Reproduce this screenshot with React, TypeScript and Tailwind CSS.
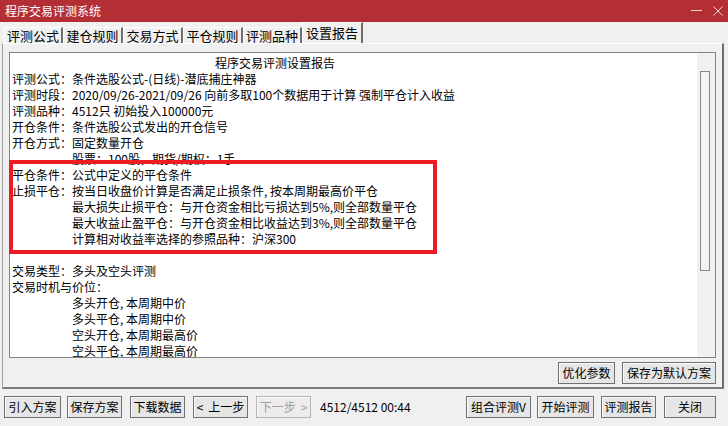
import React from "react";

const lines: { t: string; indent?: boolean }[] = [
  { t: "评测公式：条件选股公式-(日线)-潜底捕庄神器" },
  { t: "评测时段：2020/09/26-2021/09/26 向前多取100个数据用于计算 强制平仓计入收益" },
  { t: "评测品种：4512只 初始投入100000元" },
  { t: "开仓条件：条件选股公式发出的开仓信号" },
  { t: "开仓方式：固定数量开仓" },
  { t: "股票：100股，期货/期权：1手", indent: true },
  { t: "平仓条件：公式中定义的平仓条件" },
  { t: "止损平仓：按当日收盘价计算是否满足止损条件, 按本周期最高价平仓" },
  { t: "最大损失止损平仓：与开仓资金相比亏损达到5%,则全部数量平仓", indent: true },
  { t: "最大收益止盈平仓：与开仓资金相比收益达到3%,则全部数量平仓", indent: true },
  { t: "计算相对收益率选择的参照品种：沪深300", indent: true },
  { t: "" },
  { t: "交易类型：多头及空头评测" },
  { t: "交易时机与价位：" },
  { t: "多头开仓, 本周期中价", indent: true },
  { t: "多头平仓, 本周期中价", indent: true },
  { t: "空头开仓, 本周期最高价", indent: true },
  { t: "空头平仓, 本周期最高价", indent: true },
];

function Btn({ w, children, disabled }: { w: string; children: React.ReactNode; disabled?: boolean }) {
  return (
    <div
      className={`${w} h-[22px] shrink-0 flex items-center justify-center whitespace-nowrap border ${
        disabled ? "border-[#b5b5b5] text-[#a0a0a0] bg-[#ececec]" : "border-[#707070] text-black bg-[#e6e6e6]"
      } shadow-[inset_1px_1px_0_#fcfcfc] text-[12px] leading-none`}
    >
      {children}
    </div>
  );
}

function Tab({ w, label, active }: { w: string; label: string; active?: boolean }) {
  return (
    <div
      className={`${w} ${
        active ? "h-[21px]" : "h-[16px]"
      } bg-[#f0f0f0] shrink-0 flex items-center justify-center whitespace-nowrap border-t border-l border-t-white border-l-white border-r-2 border-r-[#6e6e6e] text-[13px] leading-[14px] text-black`}
    >
      {label}
    </div>
  );
}

export default function App() {
  return (
    <div className="w-[728px] h-[426px] bg-[#f0f0f0] relative overflow-hidden font-['Noto_Sans_CJK_SC','Noto_Sans',sans-serif] text-black">
      {/* title bar */}
      <div className="h-[22px] bg-[#b42e36] flex items-center pl-[5px] pr-[5px] text-white">
        <span className="text-[12px] leading-none">程序交易评测系统</span>
        <div className="ml-auto flex items-center gap-[10px]">
          <svg width="12" height="12" viewBox="0 0 12 12">
            <line x1="0" y1="5.5" x2="11" y2="5.5" stroke="#f3d6d8" strokeWidth="1" />
          </svg>
          <svg width="10" height="10" viewBox="0 0 10 10">
            <line x1="0.5" y1="0.5" x2="9.5" y2="9.5" stroke="#f3d6d8" strokeWidth="1" />
            <line x1="9.5" y1="0.5" x2="0.5" y2="9.5" stroke="#f3d6d8" strokeWidth="1" />
          </svg>
        </div>
      </div>

      {/* tabs */}
      <div className="h-[21px] flex items-end pl-[4px]">
        <Tab w="w-[59px]" label="评测公式" />
        <Tab w="w-[60px]" label="建仓规则" />
        <Tab w="w-[60px]" label="交易方式" />
        <Tab w="w-[60px]" label="平仓规则" />
        <Tab w="w-[59px]" label="评测品种" />
        <Tab w="w-[61px]" label="设置报告" active />
      </div>

      {/* panel */}
      <div className="ml-[2px] w-[722px] h-[346px] border-t border-t-white border-l border-l-[#a0a0a0] border-r-2 border-r-[#6e6e6e] border-b-2 border-b-[#7a7a7a] flex flex-col">
        <div className="ml-[6px] mt-[8px] w-[707px] h-[306px] border border-[#828282] bg-white flex">
          <div className="flex-1 pt-[2px] pl-[2px] text-[12px] leading-[16px] overflow-hidden whitespace-nowrap">
            <div className="pl-[203px]">程序交易评测设置报告</div>
            {lines.map((l, i) => (
              <div key={i} className={`h-[16px] ${l.indent ? "pl-[60px]" : ""}`}>
                {l.t}
              </div>
            ))}
          </div>
          <div className="w-[18px] h-full bg-[#f2f1f0] pt-[18px] pl-[3px]">
            <div className="w-[10px] h-[200px] border border-[#8a8a8a] bg-[#f4f4f4]" />
          </div>
        </div>
        <div className="mt-[4px] flex justify-end pr-[6px] gap-[7px]">
          <Btn w="w-[57px]">优化参数</Btn>
          <Btn w="w-[94px]">保存为默认方案</Btn>
        </div>
      </div>

      {/* bottom bar */}
      <div className="mt-[7px] flex items-center pl-[4px] pr-[12px]">
        <Btn w="w-[57px]">引入方案</Btn>
        <div className="ml-[6px]">
          <Btn w="w-[55px]">保存方案</Btn>
        </div>
        <div className="ml-[8px]">
          <Btn w="w-[55px]">下载数据</Btn>
        </div>
        <div className="ml-[8px]">
          <Btn w="w-[55px]">
            <span className="mr-[5px]">&lt;</span>上一步
          </Btn>
        </div>
        <div className="ml-[8px]">
          <Btn w="w-[55px]" disabled>
            下一步<span className="ml-[5px]">&gt;</span>
          </Btn>
        </div>
        <span className="ml-[9px] text-[12px] leading-none">4512/4512 00:44</span>
        <div className="ml-auto flex items-center">
          <Btn w="w-[65px]">组合评测V</Btn>
          <div className="ml-[6px]">
            <Btn w="w-[57px]">开始评测</Btn>
          </div>
          <div className="ml-[7px]">
            <Btn w="w-[55px]">评测报告</Btn>
          </div>
          <div className="ml-[8px]">
            <Btn w="w-[52px]">关闭</Btn>
          </div>
        </div>
      </div>

      {/* red highlight box */}
      <div className="absolute left-[9px] top-[160px] w-[428px] h-[94px] border-4 border-[#ed1c24] pointer-events-none" />
    </div>
  );
}
